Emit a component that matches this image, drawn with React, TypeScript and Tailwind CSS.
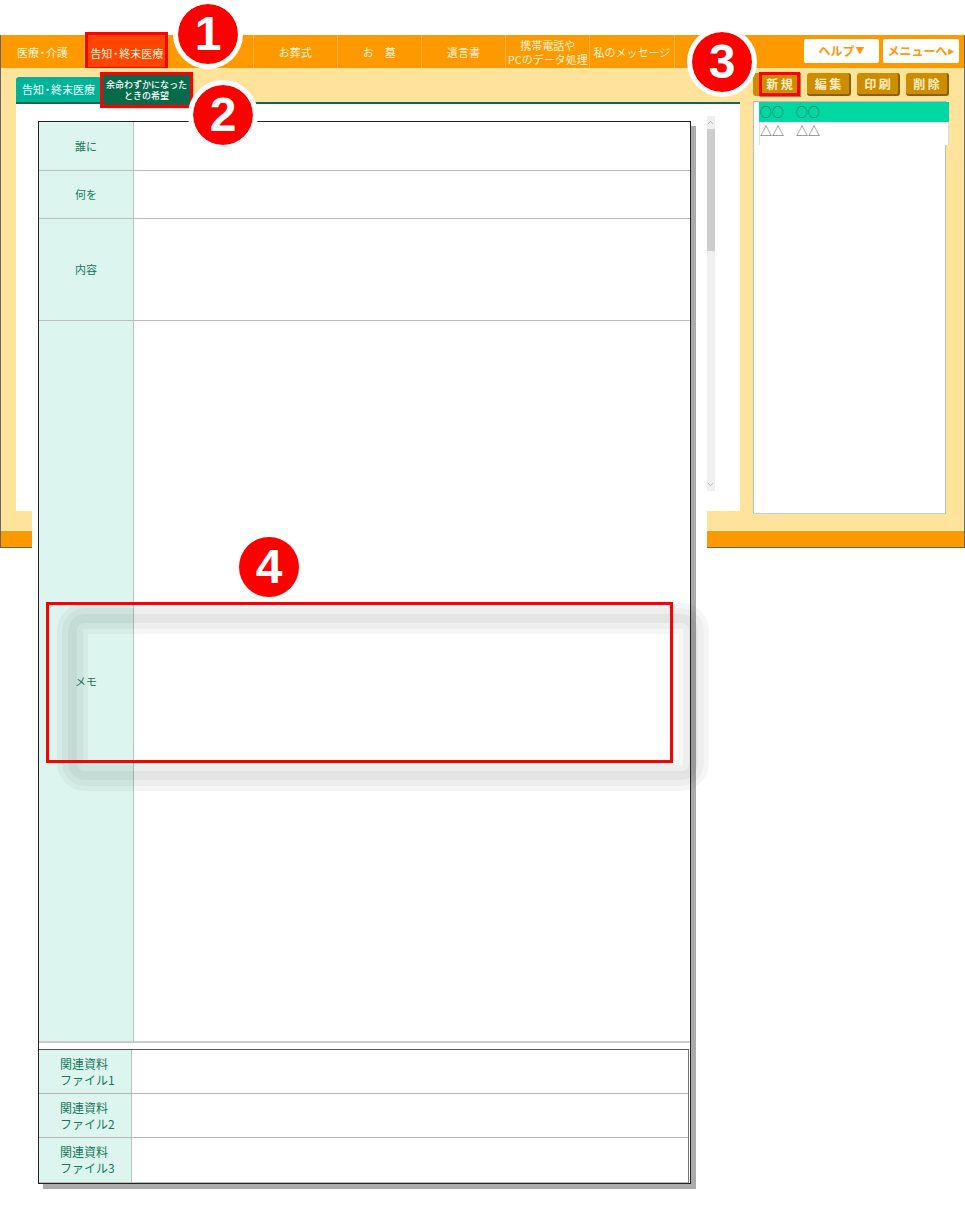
import { ChevronDown, ChevronUp } from "lucide-react";

const FONT = { fontFamily: '"Noto Sans CJK JP", "Noto Sans", sans-serif' };

const navItems = ["医療・介護", "告知・終末医療", "", "お葬式", "お　墓", "遺言書", "携帯電話や\nPCのデータ処理", "私のメッセージ"];

const DotText = ({ text }: { text: string }) => {
  const parts = text.split("・");
  if (parts.length < 2) return <>{text}</>;
  return (
    <>
      {parts[0]}
      <span className="mx-[-2px]">・</span>
      {parts[1]}
    </>
  );
};

const NavCell = ({ label }: { label: string }) => {
  const active = label === "告知・終末医療";
  return (
    <div className="w-[84.2px] h-full border-r border-[#ffb445] flex items-center justify-center text-[11px] leading-[14px] text-[#fff3d6] text-center whitespace-pre">
      {active ? (
        <div className="w-[77px] h-[32px] -mt-[2px] bg-[#ff4500] outline-[3px] outline-solid outline-[#f00] shadow-[3px_3px_2px_rgba(0,0,0,0.5)] flex items-center justify-center pt-[4px]">
          <DotText text={label} />
        </div>
      ) : (
        <DotText text={label} />
      )}
    </div>
  );
};

const ActionButton = ({ label, className }: { label: string; className: string }) => (
  <button
    className={`h-[23px] bg-[#cc8e00] rounded-[3px] border-r-2 border-b-2 border-[#8a6200] text-[12px] leading-none font-bold text-[#ffeec4] whitespace-pre ${className}`}
  >
    {label}
  </button>
);

const Badge = ({ n, className }: { n: number; className: string }) => (
  <div
    className={`absolute w-[60px] h-[60px] rounded-full bg-[#f00] flex items-center justify-center text-white font-bold text-[48px] leading-none ${className}`}
    style={{ fontFamily: '"Liberation Sans", sans-serif' }}
  >
    {n}
  </div>
);

const FormRow = ({ label, className }: { label: string; className: string }) => (
  <div className={`flex shrink-0 border-b border-[#bdbdbd] ${className}`}>
    <div className="w-[95px] shrink-0 bg-[#dcf5ee] border-r border-[#b5c5c0] flex items-center justify-center text-[11px] text-[#17775c]">
      {label}
    </div>
    <div className="flex-1" />
  </div>
);

const FileRow = ({ n, last }: { n: number; last?: boolean }) => (
  <div className={`flex h-[44px] shrink-0 ${last ? "" : "border-b border-[#b5b5b5]"}`}>
    <div className="w-[93px] shrink-0 bg-[#dcf5ee] border-r border-[#b5c5c0] pl-[21px] pt-[6px] text-[12px] leading-[16px] text-[#17775c]">
      関連資料
      <br />
      ファイル{n}
    </div>
    <div className="flex-1" />
  </div>
);

export default function App() {
  return (
    <div className="relative h-[1205px] overflow-hidden bg-white pt-[35px]" style={FONT}>
      {/* app window behind the form */}
      <div className="h-[513px] flex flex-col border-x border-b border-[#666]">
        <div className="h-[33px] shrink-0 bg-[#ff9900] flex">
          {navItems.map((item, i) => (
            <NavCell key={i} label={item} />
          ))}
          <div className="ml-auto flex gap-[4px] pt-[4px] pr-[5px]">
            <button className="w-[75px] h-[24px] bg-white rounded-[2px] text-[12px] font-bold text-[#ff9900] flex items-center justify-center">
              ヘルプ<span className="text-[9px] ml-[1px]">▼</span>
            </button>
            <button className="w-[76px] h-[24px] bg-white rounded-[2px] text-[12px] font-bold text-[#ff9900] flex items-center justify-center">
              メニューへ<span className="text-[7px]">▶</span>
            </button>
          </div>
        </div>

        <div className="flex-1 min-h-0 bg-[#ffe39b] border-b border-[#ffefc0] flex pl-[15px]">
          <div className="w-[724px] flex flex-col pb-[19px]">
            <div className="h-[36px] shrink-0 flex items-end gap-[2px] border-b-2 border-[#0a6b4a]">
              <div className="w-[85px] h-[25px] bg-[#00b398] rounded-t-[3px] flex items-center justify-center text-[11px] text-[#eafff8]">
                <DotText text="告知・終末医療" />
              </div>
              <div className="w-[87px] h-[30px] -mb-[3px] bg-[#066b4b] outline-[3px] outline-solid outline-[#f00] shadow-[3px_3px_2px_rgba(0,0,0,0.4)] flex items-center justify-center text-center text-[9px] leading-[11px] whitespace-nowrap font-medium text-white relative">
                <span>
                  余命わずかになった
                  <br />
                  ときの希望
                </span>
              </div>
            </div>
            <div className="flex-1 bg-white flex justify-end pr-[25px] pt-[12px] pb-[20px]">
              <div className="w-[9px] bg-[#f0f0f0] flex flex-col items-center text-[#a0a0a0]">
                <ChevronUp size={9} className="mt-[2px] mb-[2px] shrink-0" />
                <div className="w-full h-[122px] bg-[#cdcdcd]" />
                <ChevronDown size={9} className="mt-auto mb-[2px] shrink-0" />
              </div>
            </div>
          </div>

          <div className="w-[196px] ml-[13px] flex flex-col">
            <div className="flex pt-[5px]">
              <div className="w-[47px] h-[23px] bg-[#cc8e00] rounded-[3px] flex justify-end">
                <div className="w-[41px] h-[24px] -mt-px border-[3px] border-[#f00] shadow-[1px_1px_1px_rgba(0,0,0,0.4)] flex items-center justify-center text-[12px] leading-none font-bold text-[#ffeec4] whitespace-pre">
                  新 規
                </div>
              </div>
              <ActionButton label="編 集" className="w-[44px] ml-[7px]" />
              <ActionButton label="印 刷" className="w-[43px] ml-[6px]" />
              <ActionButton label="削 除" className="w-[43px] ml-[6px]" />
            </div>
            <div className="mt-[5px] w-[193px] h-[413px] bg-white border border-[#bbb] border-b-[#b5d5d5] pl-[5px]">
              <div className="w-[190px] h-[20px] bg-[#00d8a4] pl-[1px] text-[12px] leading-[20px] text-[#555]">○○　○○</div>
              <div className="w-[190px] h-[23px] bg-white border-x border-[#c8e8e8] text-[12px] leading-[18px] text-[#555]">△△　△△</div>
            </div>
          </div>
        </div>

        <div className="h-[16px] shrink-0 bg-[#ff9900]" />
      </div>

      {/* form sheet laid over the window */}
      <div className="absolute left-[32px] top-[110px] w-[675px] bottom-0 bg-white pl-[6px] pt-[11px]">
        <div className="w-[653px] h-[1063px] bg-white border border-[#222] shadow-[5px_5px_0_#aaa] flex flex-col">
          <FormRow label="誰に" className="h-[49px]" />
          <FormRow label="何を" className="h-[48px]" />
          <FormRow label="内容" className="h-[102px]" />
          <div className="flex h-[722px] shrink-0 border-b-2 border-[#ccc]">
            <div className="w-[95px] shrink-0 bg-[#dcf5ee] border-r border-[#b5c5c0] flex items-center justify-center text-[11px] text-[#17775c]">
              メモ
            </div>
            <div className="flex-1" />
          </div>
          <div className="mt-[6px] mr-px border-t border-[#555] border-r border-r-[#777] border-b border-b-[#bbb] flex flex-col">
            <FileRow n={1} />
            <FileRow n={2} />
            <FileRow n={3} last />
          </div>
        </div>
      </div>

      {/* annotation layer */}
      <div className="absolute left-[57px] top-[603px] w-[652px] h-[188px] rounded-[28px] border-[5px] border-[rgba(0,0,0,0.035)]">
        <div className="h-full rounded-[23px] border-[6px] border-[rgba(0,0,0,0.065)]">
          <div className="h-full rounded-[17px] border-[9px] border-[rgba(0,0,0,0.105)]">
            <div className="h-full rounded-[8px] border-[6px] border-[rgba(0,0,0,0.065)]">
              <div className="h-full rounded-[2px] border-[5px] border-[rgba(0,0,0,0.035)]" />
            </div>
          </div>
        </div>
      </div>
      <div className="absolute left-[46px] top-[602px] w-[627px] h-[161px] border-[3px] border-[#f00]" />

      <Badge n={1} className="left-[178px] top-[4px] outline-[5px] outline-solid outline-white" />
      <Badge n={2} className="left-[193px] top-[85px] outline-[5px] outline-solid outline-white" />
      <Badge n={3} className="left-[692px] top-[32px] outline-[5px] outline-solid outline-white" />
      <Badge n={4} className="left-[239px] top-[537px]" />
    </div>
  );
}
